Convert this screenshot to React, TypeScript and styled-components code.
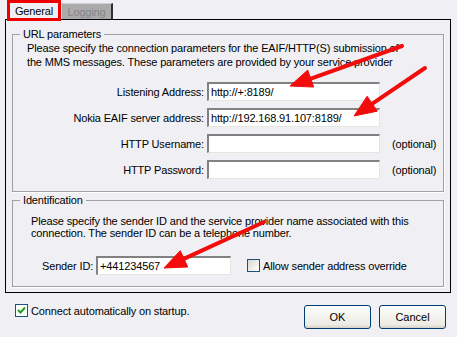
import React, { FC } from 'react';
import styled, { createGlobalStyle } from 'styled-components';

const GlobalStyle = createGlobalStyle`
  html, body {
    margin: 0;
    padding: 0;
    background: #f0f0f4;
  }
  body {
    font-family: 'Liberation Sans', Arial, sans-serif;
    font-size: 11px;
    letter-spacing: -0.15px;
    color: #000;
  }
`;

const Dialog = styled.div`
  position: relative;
  width: 457px;
  height: 337px;
  overflow: hidden;
  background: #f0f0f4;
`;

const TabStrip = styled.div`
  position: relative;
  z-index: 1;
  display: flex;
  align-items: flex-end;
  height: 21px;
  padding-left: 7px;
  margin-bottom: -2px;
`;

const ActiveTab = styled.div`
  box-sizing: border-box;
  width: 54px;
  height: 21px;
  border: 3px solid #ee0000;
  background: #f0f0f4;
  display: flex;
  align-items: center;
  justify-content: center;
  padding-top: 1px;
`;

const Tab = styled.div`
  box-sizing: border-box;
  width: 52px;
  height: 16px;
  margin-bottom: 2px;
  border-left: 1px solid #d8d8d8;
  border-top: 1px solid #d0d0d0;
  border-right: 2px solid #303030;
  background: #ababab;
  color: #848484;
  display: flex;
  align-items: center;
  justify-content: center;
`;

const Panel = styled.div`
  box-sizing: border-box;
  height: 274px;
  margin: 0 6px 0 5px;
  border: 1px solid #000;
  padding: 0 6px;
`;

const Group = styled.fieldset<{ $top: number; $left: number; $bottom: number }>`
  margin: ${(p) => p.$top}px 0 0;
  padding: 0 8px ${(p) => p.$bottom}px ${(p) => p.$left}px;
  border: 1px solid #a0a0a0;
  box-shadow: 1px 1px 0 #fff;
  min-width: 0;
`;

const Legend = styled.legend<{ $shift: number }>`
  margin-left: -${(p) => p.$shift}px;
  padding: 0 3px;
  line-height: 13px;
`;

const Note = styled.p<{ $lh: number; $top: number }>`
  margin: ${(p) => p.$top}px 0 0;
  line-height: ${(p) => p.$lh}px;
  white-space: nowrap;
`;

const FormGrid = styled.div`
  display: grid;
  grid-template-columns: 180px 173px auto;
  grid-auto-rows: 19px;
  row-gap: 7px;
  column-gap: 3px;
  align-items: center;
  margin-top: 13px;
  margin-left: -3px;
`;

const Label = styled.label`
  text-align: right;
  white-space: nowrap;
`;

const Input = styled.div<{ $width?: number }>`
  box-sizing: border-box;
  height: 19px;
  ${(p) => (p.$width ? `width: ${p.$width}px;` : '')}
  border-top: 2px solid #818181;
  border-left: 2px solid #818181;
  border-right: 1px solid #e6e6de;
  border-bottom: 1px solid #e6e6de;
  background: #fff;
  padding-left: 2px;
  display: flex;
  align-items: center;
  white-space: nowrap;
`;

const Hint = styled.span`
  margin-left: 9px;
`;

const SenderRow = styled.div`
  display: flex;
  align-items: center;
  margin-top: 17px;
  padding-left: 11px;
  height: 19px;
`;

const CheckLabel = styled.label<{ $gap: number }>`
  display: flex;
  align-items: center;
  gap: ${(p) => p.$gap}px;
  white-space: nowrap;
`;

const Box = styled.span<{ $checked?: boolean }>`
  box-sizing: border-box;
  width: 13px;
  height: 13px;
  border: 1px solid #1c5180;
  background: ${(p) =>
    p.$checked ? '#fff' : 'linear-gradient(135deg, #d8d8d2 0%, #f4f4f0 70%, #fff 100%)'};
  display: flex;
  align-items: center;
  justify-content: center;
`;

const BottomBar = styled.div`
  display: flex;
  justify-content: space-between;
  align-items: flex-start;
  padding: 11px 11px 0 15px;
`;

const Buttons = styled.div`
  display: flex;
  gap: 8px;
  margin-top: 1px;
`;

const Button = styled.button`
  box-sizing: border-box;
  width: 67px;
  height: 24px;
  border: 1px solid #003c74;
  border-radius: 3px;
  background: linear-gradient(#ffffff 0%, #f4f4f0 40%, #ecebe6 85%, #d6d0c5 100%);
  font-family: 'Liberation Sans', Arial, sans-serif;
  font-size: 11px;
  color: #000;
  padding: 0;
`;

const Overlay = styled.svg`
  position: absolute;
  left: 0;
  top: 0;
  pointer-events: none;
  z-index: 2;
`;

type ArrowProps = { x1: number; y1: number; x2: number; y2: number };

const Arrow: FC<ArrowProps> = ({ x1, y1, x2, y2 }) => {
  const dx = x2 - x1;
  const dy = y2 - y1;
  const len = Math.hypot(dx, dy);
  const ux = dx / len;
  const uy = dy / len;
  const head = 22;
  const half = 9;
  const bx = x2 - ux * head;
  const by = y2 - uy * head;
  const pts = [
    `${x2},${y2}`,
    `${bx - uy * half},${by + ux * half}`,
    `${bx + uy * half},${by - ux * half}`,
  ].join(' ');
  return (
    <g fill="#f20c0c" stroke="#f20c0c">
      <line x1={x1} y1={y1} x2={bx + ux * 2} y2={by + uy * 2} strokeWidth={4} strokeLinecap="round" />
      <polygon points={pts} strokeWidth={1} strokeLinejoin="round" />
    </g>
  );
};

const App: FC = () => (
  <Dialog>
    <GlobalStyle />
    <TabStrip>
      <ActiveTab>General</ActiveTab>
      <Tab>Logging</Tab>
    </TabStrip>
    <Panel>
      <Group $top={8} $left={14} $bottom={12}>
        <Legend $shift={7}>URL parameters</Legend>
        <Note $lh={14} $top={0}>
          Please specify the connection parameters for the EAIF/HTTP(S) submission of
          <br />
          the MMS messages. These parameters are provided by your service provider
        </Note>
        <FormGrid>
          <Label>Listening Address:</Label>
          <Input>http://+:8189/</Input>
          <span />
          <Label>Nokia EAIF server address:</Label>
          <Input>http://192.168.91.107:8189/</Input>
          <span />
          <Label>HTTP Username:</Label>
          <Input />
          <Hint>(optional)</Hint>
          <Label>HTTP Password:</Label>
          <Input />
          <Hint>(optional)</Hint>
        </FormGrid>
      </Group>
      <Group $top={2} $left={18} $bottom={11}>
        <Legend $shift={11}>Identification</Legend>
        <Note $lh={12} $top={8}>
          Please specify the sender ID and the service provider name associated with this
          <br />
          connection. The sender ID can be a telephone number.
        </Note>
        <SenderRow>
          <Label>Sender ID:</Label>
          <Input $width={135} style={{ marginLeft: 3 }}>+441234567</Input>
          <CheckLabel $gap={3} style={{ marginLeft: 16 }}>
            <Box />
            Allow sender address override
          </CheckLabel>
        </SenderRow>
      </Group>
    </Panel>
    <BottomBar>
      <CheckLabel $gap={3}>
        <Box $checked>
          <svg width="9" height="9" viewBox="0 0 9 9">
            <path d="M1 4 L3.5 6.5 L8 1.5" fill="none" stroke="#21a121" strokeWidth="2" />
          </svg>
        </Box>
        Connect automatically on startup.
      </CheckLabel>
      <Buttons>
        <Button>OK</Button>
        <Button>Cancel</Button>
      </Buttons>
    </BottomBar>
    <Overlay width={457} height={337}>
      <Arrow x1={402} y1={46} x2={290} y2={86} />
      <Arrow x1={425} y1={68} x2={354} y2={116} />
      <Arrow x1={264} y1={222} x2={164} y2={268} />
    </Overlay>
  </Dialog>
);

export default App;
